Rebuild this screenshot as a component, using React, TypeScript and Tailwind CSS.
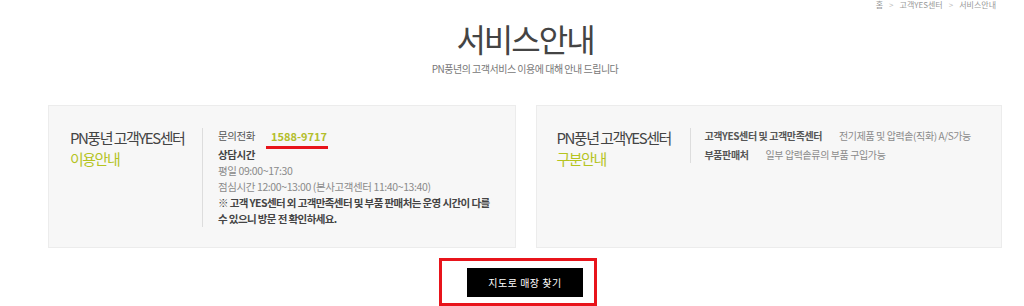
import React from "react";

const ServiceGuide = () => {
  return (
    <div className="w-[1024px] h-[306px] overflow-hidden bg-white font-['Noto_Sans_CJK_KR',sans-serif]">
      <div className="ml-[48px] w-[954px] flex flex-col items-center">
        {/* Breadcrumb */}
        <div className="self-end flex items-center gap-[6px] pr-[6px] h-[9px] text-[8px] leading-[9px] text-[#999]">
          <span>홈</span>
          <span className="text-[#bbb]">&gt;</span>
          <span>고객YES센터</span>
          <span className="text-[#bbb]">&gt;</span>
          <span>서비스안내</span>
        </div>

        {/* Title */}
        <h1 className="mt-[9px] text-[32px] leading-[40px] tracking-[-2px] text-[#444]">
          서비스안내
        </h1>
        <p className="mt-[4px] text-[10px] leading-[14px] tracking-[-0.5px] text-[#777]">
          PN풍년의 고객서비스 이용에 대해 안내 드립니다
        </p>

        {/* Cards */}
        <div className="mt-[29px] w-full flex gap-[20px]">
          <div className="flex-1 bg-[#f7f7f7] border border-[#ececec] pl-[21px] pt-[21px] pb-[20px] flex items-start">
            <div className="w-[132px] shrink-0 text-[15px] leading-[21px] tracking-[-1.5px]">
              <div className="text-[#444]">PN풍년 고객YES센터</div>
              <div className="text-[#b5c41f]">이용안내</div>
            </div>
            <div className="mt-[1px] border-l border-[#ddd] pl-[15px] text-[10.5px] leading-[16px] tracking-[-0.4px] whitespace-nowrap">
              <div className="flex items-center gap-[16px] mb-[3px] text-[#555]">
                <span>문의전화</span>
                <span className="relative font-bold text-[11px] tracking-[0px] text-[#b3be2b]">
                  1588-9717
                  <span className="absolute -left-[5px] -right-[1px] top-[18px] h-[3px] bg-[#e8141b]" />
                </span>
              </div>
              <div className="font-bold text-[#444]">상담시간</div>
              <div className="text-[#8a8a8a]">평일 09:00~17:30</div>
              <div className="text-[#8a8a8a]">점심시간 12:00~13:00 (본사고객센터 11:40~13:40)</div>
              <div className="font-bold text-[#444] tracking-[-0.6px]">
                ※ 고객 YES센터 외 고객만족센터 및 부품 판매처는 운영 시간이 다를
                <br />
                수 있으니 방문 전 확인하세요.
              </div>
            </div>
          </div>

          <div className="flex-1 bg-[#f7f7f7] border border-[#ececec] pl-[20px] pt-[21px] pb-[20px] flex items-start">
            <div className="w-[133px] shrink-0 text-[15px] leading-[21px] tracking-[-1.5px]">
              <div className="text-[#444]">PN풍년 고객YES센터</div>
              <div className="text-[#b5c41f]">구분안내</div>
            </div>
            <div className="mt-[1px] border-l border-[#ddd] pl-[14px] text-[10px] leading-[16px] tracking-[-0.4px] whitespace-nowrap">
              <div className="flex gap-[17px] mb-[3px]">
                <span className="font-bold text-[#555]">고객YES센터 및 고객만족센터</span>
                <span className="text-[#8a8a8a]">전기제품 및 압력솥(직화) A/S가능</span>
              </div>
              <div className="flex gap-[17px]">
                <span className="font-bold text-[#555]">부품판매처</span>
                <span className="text-[#8a8a8a]">일부 압력솥류의 부품 구입가능</span>
              </div>
            </div>
          </div>
        </div>

        {/* Map button */}
        <div className="mt-[10px] mr-[14px] border-[3px] border-[#e8141b] pl-[25px] pr-[11px] pt-[7px] pb-[6px]">
          <button className="w-[116px] h-[29px] bg-black text-white text-[10px] tracking-[0.5px] flex items-center justify-center">
            지도로 매장 찾기
          </button>
        </div>
      </div>
    </div>
  );
};

export default function App() {
  return <ServiceGuide />;
}
